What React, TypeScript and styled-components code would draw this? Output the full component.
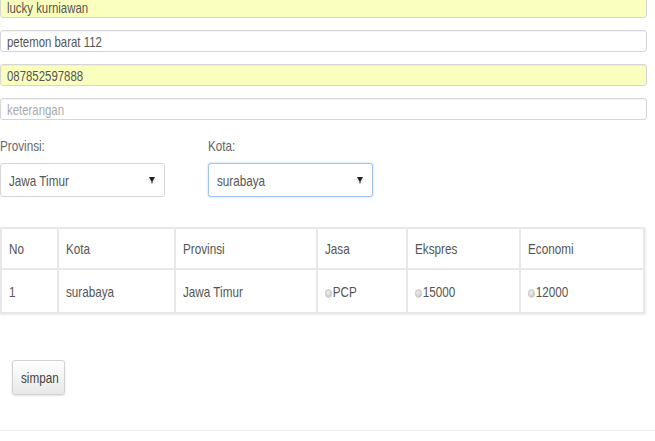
import styled, { createGlobalStyle } from 'styled-components';

const GlobalStyle = createGlobalStyle`
    html, body {
        margin: 0;
        padding: 0;
        background: #fff;
    }
    body {
        font-family: 'Liberation Sans', Arial, sans-serif;
        color: #555;
        overflow: hidden;
    }
`;

// the screenshot's font is a narrow one, squeeze the regular face
const Narrow = styled.span<{ $x?: number }>`
    display: inline-block;
    white-space: nowrap;
    transform: scaleX(${(p) => p.$x ?? 0.78});
    transform-origin: left center;
`;

const Page = styled.div`
    width: 647px;
    margin-top: -4px;
    display: flex;
    flex-direction: column;
`;

const Fields = styled.div`
    display: flex;
    flex-direction: column;
    gap: 12px;
`;

const Input = styled.div<{ $filled?: boolean; $placeholder?: boolean }>`
    height: 22px;
    box-sizing: border-box;
    border: 1px solid #d6d6d6;
    border-radius: 3px;
    background: ${(p) => (p.$filled ? '#faffbd' : '#fff')};
    box-shadow: inset 0 1px 1px rgba(0, 0, 0, 0.05);
    padding: 0 6px;
    display: flex;
    align-items: center;
    font-size: 15px;
    color: ${(p) => (p.$placeholder ? '#aaa' : '#555')};
`;

const SelectRow = styled.div`
    display: flex;
    gap: 43px;
    margin-top: 18px;
`;

const SelectGroup = styled.div`
    display: flex;
    flex-direction: column;
    gap: 9px;
`;

const Label = styled.label`
    font-size: 15px;
    color: #666;
    height: 16px;
    line-height: 16px;
`;

const SelectBox = styled.div<{ $focus?: boolean }>`
    width: 165px;
    height: 34px;
    box-sizing: border-box;
    border: 1px solid ${(p) => (p.$focus ? '#9ec3f5' : '#d6d6d6')};
    box-shadow: ${(p) => (p.$focus ? '0 0 2px rgba(102, 160, 240, 0.6)' : 'none')};
    border-radius: 3px;
    background: #fff;
    display: flex;
    align-items: center;
    justify-content: space-between;
    padding: 0 9px 0 8px;
    font-size: 15px;
    color: #555;
`;

const Arrow = () => (
    <svg width="6" height="8" viewBox="0 0 6 8">
        <path d="M0 1 L6 1 L3.6 5.5 L3.4 7.5 L2.6 7.5 L2.4 5.5 Z" fill="#222" />
    </svg>
);

const Table = styled.table`
    margin-top: 30px;
    width: 645px;
    border-collapse: collapse;
    border: 1px solid #ddd;
    box-shadow: 1px 1px 2px rgba(0, 0, 0, 0.08);
    font-size: 15px;
`;

const Th = styled.th<{ $w: number }>`
    width: ${(p) => p.$w}px;
    border: 2px solid #e8e8e8;
    height: 41px;
    box-sizing: border-box;
    padding: 0 7px;
    text-align: left;
    font-weight: normal;
    color: #555;
`;

const Td = styled.td`
    border: 2px solid #e8e8e8;
    height: 44px;
    box-sizing: border-box;
    padding: 0 7px;
    color: #555;
`;

const Radio = styled.span`
    display: inline-block;
    width: 9px;
    height: 9px;
    border-radius: 50%;
    background: radial-gradient(circle at 40% 35%, #f0f0f0, #bdbdbd);
    border: 1px solid #c8c8c8;
    box-sizing: border-box;
    margin-right: 1px;
    vertical-align: -1px;
`;

const Button = styled.button`
    margin: 46px 0 0 12px;
    align-self: flex-start;
    width: 53px;
    height: 35px;
    border: 1px solid #d2d2d2;
    border-radius: 3px;
    background: linear-gradient(#fff, #e8e8e8);
    box-shadow: 0 1px 2px rgba(0, 0, 0, 0.12);
    font-family: inherit;
    font-size: 15px;
    color: #444;
    padding: 0 0 0 8px;
    text-align: left;
`;

const Rule = styled.hr`
    margin: 35px 0 0 0;
    width: 655px;
    border: 0;
    border-top: 1px solid #eee;
`;

const columns = [
    { name: 'No', w: 57 },
    { name: 'Kota', w: 118 },
    { name: 'Provinsi', w: 142 },
    { name: 'Jasa', w: 90 },
    { name: 'Ekspres', w: 114 },
    { name: 'Economi', w: 124 },
];

const row = ['1', 'surabaya', 'Jawa Timur'];
const options = ['PCP', '15000', '12000'];

function App() {
    return (
        <Page>
            <GlobalStyle />
            <Fields>
                <Input $filled>
                    <Narrow $x={0.76}>lucky kurniawan</Narrow>
                </Input>
                <Input>
                    <Narrow $x={0.76}>petemon barat 112</Narrow>
                </Input>
                <Input $filled>
                    <Narrow $x={0.76}>087852597888</Narrow>
                </Input>
                <Input $placeholder>
                    <Narrow $x={0.76}>keterangan</Narrow>
                </Input>
            </Fields>
            <SelectRow>
                <SelectGroup>
                    <Label>
                        <Narrow>Provinsi:</Narrow>
                    </Label>
                    <SelectBox>
                        <Narrow>Jawa Timur</Narrow>
                        <Arrow />
                    </SelectBox>
                </SelectGroup>
                <SelectGroup>
                    <Label>
                        <Narrow>Kota:</Narrow>
                    </Label>
                    <SelectBox $focus>
                        <Narrow>surabaya</Narrow>
                        <Arrow />
                    </SelectBox>
                </SelectGroup>
            </SelectRow>
            <Table>
                <thead>
                    <tr>
                        {columns.map((c) => (
                            <Th key={c.name} $w={c.w}>
                                <Narrow>{c.name}</Narrow>
                            </Th>
                        ))}
                    </tr>
                </thead>
                <tbody>
                    <tr>
                        {row.map((v) => (
                            <Td key={v}>
                                <Narrow>{v}</Narrow>
                            </Td>
                        ))}
                        {options.map((v) => (
                            <Td key={v}>
                                <Narrow>
                                    <Radio />
                                    {v}
                                </Narrow>
                            </Td>
                        ))}
                    </tr>
                </tbody>
            </Table>
            <Button>
                <Narrow>simpan</Narrow>
            </Button>
            <Rule />
        </Page>
    );
}

export default App;
